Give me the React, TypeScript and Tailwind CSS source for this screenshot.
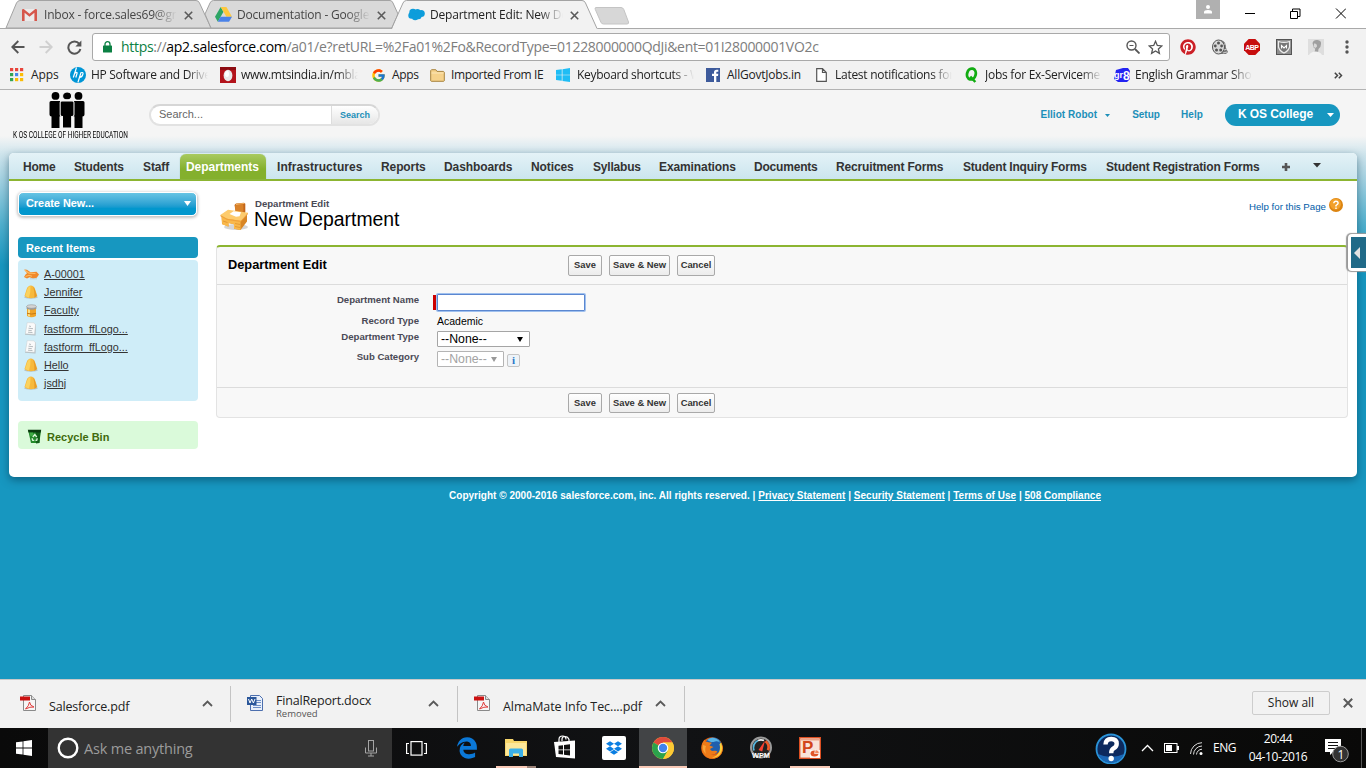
import React from "react";
import { FcGoogle } from "react-icons/fc";
import { FaPinterest, FaEdgeLegacy, FaDropbox } from "react-icons/fa6";

const SEGOE = "font-['Open_Sans','Noto_Sans',sans-serif]";
const FADE = "[mask-image:linear-gradient(to_right,#000_82%,transparent)]";

/* ---------- Browser icons ---------- */
const Gmail = () => (
  <svg width="15" height="12" viewBox="0 0 15 12">
    <path d="M1 0h13v12H1z" fill="#eceaea" />
    <path d="M0 1.2V12h2.6V3.8L7.500 7.800l4.900-4V12H15V1.200C15 .2 13.700-.2 13 .3L7.500 4.800 2 .3C1.300-.2 0 .2 0 1.200z" fill="#d6564b" />
  </svg>
);
const Drive = () => (
  <svg width="17" height="15" viewBox="0 0 17 15">
    <path d="M5.700 0L0 9.800 2.800 14.700 8.500 4.800z" fill="#2da565" />
    <path d="M5.700 0h5.700L17 9.800h-5.600z" fill="#fdc83e" />
    <path d="M5.600 9.800H17l-2.900 4.900H2.800z" fill="#4a82e8" />
  </svg>
);
const Cloud = () => (
  <svg width="17" height="13" viewBox="0 0 17 13">
    <g fill="#0d9ddb">
      <circle cx="5" cy="4.500" r="3.700" /><circle cx="9.500" cy="4" r="3" /><circle cx="13.200" cy="5.500" r="3.600" />
      <circle cx="3.500" cy="7.500" r="3.200" /><circle cx="7.200" cy="9" r="3.300" /><circle cx="10.500" cy="8.300" r="3" />
    </g>
  </svg>
);
const TabClose = () => (
  <svg width="9" height="9" viewBox="0 0 9 9"><path d="M.8.8l7.400 7.400M8.200.8L.8 8.200" stroke="#5a5a5a" strokeWidth="1.600" /></svg>
);
const Arrow = ({ flip, color }: { flip?: boolean; color: string }) => (
  <svg width="14" height="14" viewBox="0 0 14 14" className={flip ? "rotate-180" : ""}>
    <path d="M13.500 7H1.500M7.300 1L1.300 7l6 6" fill="none" stroke={color} strokeWidth="1.900" />
  </svg>
);
const Reload = () => (
  <svg width="15" height="15" viewBox="0 0 15 15">
    <path d="M12.300 3.800A6.100 6.100 0 1 0 13.400 9" fill="none" stroke="#555" strokeWidth="2" />
    <path d="M14.400.5v6H8.400z" fill="#555" />
  </svg>
);
const Lock = () => (
  <svg width="9" height="12" viewBox="0 0 9 12">
    <path d="M2 5V3.200a2.500 2.500 0 0 1 5 0V5" fill="none" stroke="#0b8043" strokeWidth="1.300" /><rect y="4.500" width="9" height="7" rx=".6" fill="#0b8043" />
  </svg>
);
const AppsGrid = () => (
  <svg width="14" height="14" viewBox="0 0 14 14">
    {["#e8453c", "#e8453c", "#e8453c", "#34a353", "#4a86e8", "#fbbc05", "#34a353", "#fbbc05", "#fbbc05"].map((c, i) => (
      <rect key={i} x={(i % 3) * 5} y={Math.floor(i / 3) * 5} width="3.200" height="3.200" fill={c} />
    ))}
  </svg>
);
const Hp = () => (
  <svg width="16" height="16" viewBox="0 0 16 16">
    <circle cx="8" cy="8" r="8" fill="#0096d6" />
    <path d="M6.500 .5L3.300 10.500M4.700 6.300Q7.500 4.300 7 6.500L5.800 10.500M11 5.500L7.900 15.500M10.800 5.700Q13.800 4.800 12.800 7.500 11.800 10.500 9.400 10.300" fill="none" stroke="#fff" strokeWidth="1.200" />
  </svg>
);
const Mts = () => (
  <svg width="16" height="16" viewBox="0 0 16 16">
    <rect width="16" height="16" fill="#b3131b" /><rect width="16" height="3" fill="#8d0c12" />
    <ellipse cx="8" cy="8.500" rx="4.400" ry="5.800" fill="#e9e9ea" /><ellipse cx="7" cy="7" rx="2" ry="3" fill="#fff" />
  </svg>
);
const Folder = () => (
  <svg width="15" height="13" viewBox="0 0 15 13">
    <path d="M.7 11.800V1.600l.8-.9h4.300l1.200 1.700h6.500l.8.800v8.600l-.6.500H1.300z" fill="#f6d28b" stroke="#a8843f" />
    <path d="M1.500 4h12" stroke="#fbe6b8" />
  </svg>
);
const WinLogo = ({ color, size }: { color: string; size: number }) => (
  <svg width={size} height={size} viewBox="0 0 16 16">
    <path d="M0 2.300l6.600-.9v6.200H0zM7.400 1.300L16 0v7.600H7.400zM0 8.400h6.600v6.200L0 13.700zM7.400 8.400H16V16l-8.600-1.200z" fill={color} />
  </svg>
);
const Fb = () => (
  <svg width="14" height="14" viewBox="0 0 14 14">
    <rect width="14" height="14" fill="#3d5a9b" /><path d="M8 14V8H6V5.800h2V4.300C8 2.500 9 1.700 10.600 1.700h1.700v2.100h-1.100c-.7 0-.9.300-.9.900v1.100h2L12 8h-1.700v6z" fill="#fff" />
  </svg>
);
const Page = () => (
  <svg width="11" height="14" viewBox="0 0 11 14"><path d="M.7.7h5.800l3.800 3.800v8.800H.7zM6.500.7v3.800h3.800" fill="#fff" stroke="#555" strokeWidth="1.200" /></svg>
);
const QIcon = () => (
  <svg width="14" height="16" viewBox="0 0 14 16">
    <ellipse cx="7.400" cy="7" rx="4.300" ry="5.500" fill="none" stroke="#12ac12" strokeWidth="2.800" transform="rotate(15 7.400 7)" />
    <path d="M6.300 9.500l5 5.500" stroke="#12ac12" strokeWidth="2.500" />
  </svg>
);
const Gr8 = () => (
  <svg width="16" height="16" viewBox="0 0 16 16">
    <path d="M2 3L9 1h5l2 3-1 4 1 4-3 3H4L0 12z" fill="#2424f2" />
    <text x="0" y="11" fontSize="9" fontWeight="bold" fill="#fff" fontFamily="Liberation Sans" textLength="9">gr</text>
    <text x="9" y="12.500" fontSize="12" fontWeight="bold" fill="#fff" fontFamily="Liberation Sans">8</text>
  </svg>
);

const bookmarks: { icon: React.ReactNode; text: string; cell: string; track: string; fade?: string }[] = [
  { icon: <AppsGrid />, text: "Apps", cell: "w-[60px]", track: "tracking-[-0.1px]" },
  { icon: <Hp />, text: "HP Software and Drive", cell: "w-[150px]", track: "tracking-[-0.3px]", fade: "w-[117px]" },
  { icon: <Mts />, text: "www.mtsindia.in/mbla", cell: "w-[151px]", track: "tracking-[-0.3px]", fade: "w-[117px]" },
  { icon: <FcGoogle size={15} />, text: "Apps", cell: "w-[59px]", track: "tracking-[-0.3px]" },
  { icon: <Folder />, text: "Imported From IE", cell: "w-[126px]", track: "tracking-[-0.35px]" },
  { icon: <WinLogo color="#1fbdf5" size={14} />, text: "Keyboard shortcuts - W", cell: "w-[150px]", track: "tracking-[-0.3px]", fade: "w-[117px]" },
  { icon: <Fb />, text: "AllGovtJobs.in", cell: "w-[108px]", track: "tracking-[-0.22px]" },
  { icon: <span className="pl-0.5"><Page /></span>, text: "Latest notifications for", cell: "w-[150px]", track: "tracking-[-0.27px]", fade: "w-[117px]" },
  { icon: <QIcon />, text: "Jobs for Ex-Serviceme", cell: "w-[150px]", track: "tracking-[-0.25px]", fade: "w-[117px]" },
  { icon: <Gr8 />, text: "English Grammar Sho", cell: "w-[140px]", track: "tracking-[-0.25px]", fade: "w-[117px]" },
];

const browserTabs = [
  { icon: <Gmail />, text: "Inbox - force.sales69@gr", cell: "w-[193px]", box: "w-[133px]", color: "text-[#454545]" },
  { icon: <Drive />, text: "Documentation - Google", cell: "w-[193px]", box: "w-[133px]", color: "text-[#454545]" },
  { icon: <Cloud />, text: "Department Edit: New De", cell: "w-[193px]", box: "w-[133px]", color: "text-[#222]" },
];

function TabStrip() {
  return (
    <div className="relative h-[29px] shrink-0 bg-white">
      <svg className="absolute left-0 top-0" width="1366" height="29" viewBox="0 0 1366 29">
        <path d="M6 28L16.500 3Q17.800.5 20 .5H196Q198.500.5 199.500 3L211 28z" fill="#d9d9d9" stroke="#a3a3a3" />
        <path d="M205 14L210 3Q211 .5 213.500 .5H390Q392 .5 393 3L398 14 392 28H211z" fill="#d9d9d9" stroke="#a3a3a3" />
        <path d="M0 28.500H1366" stroke="#a9a9a9" />
        <path d="M392 29L403 3Q404 .5 406.500 .5H582Q584.500 .5 585.500 3L597 28.500 598 29z" fill="#f2f2f2" />
        <path d="M391.500 28.500L403 3Q404 .5 406.500 .5H582Q584.500 .5 585.500 3L597 28.500" fill="none" stroke="#a3a3a3" />
        <path d="M596 7.500H621Q623 7.500 623.800 9.500L628.500 22Q629 24 627 24H603.500Q601.500 24 600.800 22L595.300 9.500Q594.500 7.500 596 7.500z" fill="#d7d7d7" stroke="#c4c4c4" />
      </svg>
      <div className="relative flex h-[29px] items-center pl-[22px]">
        {browserTabs.map((t) => (
          <div key={t.text} className={`flex shrink-0 items-center ${t.cell}`}>
            <span className="flex w-[22px] shrink-0 items-center">{t.icon}</span>
            <span className={`whitespace-nowrap text-[12px] tracking-[-0.2px] ${t.box} ${t.color} ${FADE}`}>{t.text}</span>
            <span className="ml-[7px] flex pt-px"><TabClose /></span>
          </div>
        ))}
        <div className="ml-auto flex h-full shrink-0 items-start">
          <div className="mr-[25px] flex h-[19px] w-6 items-center justify-center bg-[#b0b0b0]">
            <svg width="8" height="9" viewBox="0 0 8 9"><circle cx="4" cy="2" r="2" fill="#fff" /><path d="M0 8.500V7q0-2 4-2t4 2v1.500z" fill="#fff" /></svg>
          </div>
          <svg className="mr-[20px] mt-2" width="101" height="11" viewBox="0 0 101 11" fill="none" stroke="#000">
            <path d="M0 5.500H10M45.500 3.500h7v7h-7zM47.500 3.500v-2.500h7.500v7.500h-2.500M91 .5l10 10M101 .5l-10 10" />
          </svg>
        </div>
      </div>
    </div>
  );
}

function Toolbar() {
  return (
    <div className="flex h-[36px] shrink-0 items-center bg-[#f2f2f2] pl-[11px]">
      <Arrow color="#555" />
      <span className="ml-[14px] flex"><Arrow flip color="#d0d0d0" /></span>
      <span className="ml-[14px] flex"><Reload /></span>
      <div className="ml-[10px] flex h-[28px] w-[1078px] items-center rounded-[3px] border border-[#a9a9a9] bg-white pl-[10px]">
        <Lock />
        <span className="ml-[9px] w-[1005px] shrink-0 whitespace-nowrap text-[14px] leading-5 tracking-[-0.31px] text-[#7d7d7d]">
          <span className="text-[#0b8043]">https</span>://<span className="text-black">ap2.salesforce.com</span>/a01/e?retURL=%2Fa01%2Fo&amp;RecordType=01228000000QdJi&amp;ent=01I28000001VO2c
        </span>
        <svg className="shrink-0" width="14" height="14" viewBox="0 0 14 14" fill="none" stroke="#555"><circle cx="5.500" cy="5.500" r="4.500" strokeWidth="1.400" /><path d="M3.500 5.500h4" /><path d="M9 9l4.500 4.500" strokeWidth="1.800" /></svg>
        <svg className="ml-[8px] shrink-0" width="15" height="15" viewBox="0 0 15 15"><path d="M7.500 1.300l1.800 4.100 4.500.5-3.400 3 1 4.500-3.900-2.400-3.900 2.400 1-4.500-3.400-3 4.500-.5z" fill="none" stroke="#555" strokeWidth="1.300" /></svg>
      </div>
      <div className="ml-[10px] flex items-center gap-[16px]">
        <span className="flex w-4 rounded-full bg-white"><FaPinterest size={16} color="#cb2027" /></span>
        <svg width="16" height="16" viewBox="0 0 16 16">
          <path d="M9 1q5 1 5 8l2 4-2 2H8z" fill="#777" /><ellipse cx="6.500" cy="8" rx="6" ry="7" fill="#d8d8d8" stroke="#555" />
          <g fill="#555"><circle cx="6.500" cy="4" r="1.500" /><circle cx="3.300" cy="7" r="1.400" /><circle cx="9.600" cy="7" r="1.400" /><circle cx="4.500" cy="11" r="1.500" /><circle cx="8.700" cy="11" r="1.500" /></g>
          <path d="M11 14l4-1M12 11l3-1M12 5l2 0" stroke="#ccc" />
        </svg>
        <svg width="16" height="16" viewBox="0 0 16 16"><path d="M4.700 0h6.600L16 4.700v6.600L11.300 16H4.700L0 11.300V4.700z" fill="#c70d0d" /><text x="1.300" y="10.700" fontSize="7" fontWeight="bold" fill="#fff" fontFamily="Liberation Sans" textLength="13.500">ABP</text></svg>
        <svg width="16" height="16" viewBox="0 0 16 16"><rect x=".5" y=".5" width="15" height="15" fill="#8f8f8f" stroke="#555" /><path d="M2.500 2.500q5.500 1.800 11 0v5.500q-1 4-5.500 6-4.500-2-5.500-6z" fill="#777" stroke="#eee" strokeWidth="1.200" /><path d="M5.500 9.500V6.500L8 9l2.500-2.500v3" fill="none" stroke="#fff" strokeWidth="1.100" /></svg>
        <svg width="16" height="16" viewBox="0 0 16 16"><rect width="16" height="16" fill="#dedede" /><path d="M4.500 4q1-3.500 5-3t3.500 4q0 3.500-2.500 5L10 13.500H6.500l.8-4Q5.500 9.500 5.300 7z" fill="#9f9f9f" /><path d="M6 4.500q3-.5 3 3L7.500 9 5.700 8z" fill="#d8d8d8" /><path d="M1 16q2-3.500 6.500-3.500T14 16z" fill="#f3f3f3" /></svg>
        <svg className="ml-[5px]" width="4" height="14" viewBox="0 0 4 14" fill="#555"><circle cx="2" cy="2" r="1.700" /><circle cx="2" cy="7" r="1.700" /><circle cx="2" cy="12" r="1.700" /></svg>
      </div>
    </div>
  );
}

function BookmarkBar() {
  return (
    <div className="flex h-[25px] shrink-0 items-center border-b border-[#b3b3b3] bg-[#f2f2f2] pb-[4px] pl-[10px]">
      {bookmarks.map((b, i) => (
        <div key={i} className={`flex shrink-0 items-center ${b.cell}`}>
          <span className="flex w-[21px] shrink-0 items-center">{b.icon}</span>
          <span className={`whitespace-nowrap text-[12px] leading-4 text-[#222] ${b.track} ${b.fade ? `${b.fade} ${FADE}` : ""}`}>{b.text}</span>
        </div>
      ))}
      <svg className="ml-auto mr-[23px]" width="9" height="7" viewBox="0 0 9 7"><path d="M.8.700L3.500 3.500.8 6.300M4.800.700L7.500 3.500 4.800 6.300" fill="none" stroke="#444" strokeWidth="1.500" /></svg>
    </div>
  );
}

/* ---------- Page ---------- */
const Person = ({ x }: { x: number }) => (
  <g transform={`translate(${x} 0)`}>
    <circle cx="6" cy="3.900" r="3.900" />
    <path d="M1.500 9h9q1.500 0 1.500 1.500v12q0 2-2 2v11.500H2V24.500q-2 0-2-2v-12Q0 9 1.500 9z" />
  </g>
);

function Header() {
  return (
    <div className="flex h-[63px] shrink-0 items-start font-['Liberation_Sans',Arial,sans-serif]">
      <div className="ml-[13px] flex w-[136px] flex-col pt-[2px]">
        <svg className="ml-[34px]" width="40" height="38" viewBox="0 0 40 38">
          <Person x={2.500} /><Person x={25.500} />
          <g stroke="#f5f5f5" strokeWidth="0.900"><g transform="translate(-2 0) scale(1.150 1)"><Person x={13.200} /></g></g>
        </svg>
        <span className="origin-left scale-x-[0.78] whitespace-nowrap font-['Roboto',sans-serif] text-[8.400px] leading-[10px] text-black">K OS COLLEGE OF HIGHER EDUCATION</span>
      </div>
      <div className="mt-[14px] flex h-[22px] w-[231px] overflow-hidden rounded-full border-2 border-[#e2e2e2] border-t-[#d6d6d6] bg-white">
        <div className="w-[180px] pl-2 text-[11px] leading-[17px] text-[#666]">Search...</div>
        <div className="flex-1 border-l border-[#ddd] bg-linear-to-b from-white to-[#e6e6e6] pl-[8px] text-[9px] font-bold leading-[18px] text-[#1c8fb9]">Search</div>
      </div>
      <div className="ml-auto mt-[14px] flex h-[22px] items-center text-[10px] font-bold text-[#1c8fb9]">
        <span className="pb-px tracking-[0.05px]">Elliot Robot</span>
        <svg className="ml-[8px]" width="5" height="3" viewBox="0 0 5 3"><path d="M0 0h5L2.500 3z" fill="#1c8fb9" /></svg>
        <span className="ml-[22px] pb-px">Setup</span>
        <span className="ml-[21px] pb-px tracking-[0.1px]">Help</span>
        <div className="ml-[22px] mr-[26px] flex h-[22px] w-[115px] items-center rounded-full bg-[#1797c0] pb-[2px] pl-[13px] text-[12px] tracking-[-0.08px] text-white">
          K OS College
          <svg className="ml-auto mr-[6px] mt-px" width="7" height="4" viewBox="0 0 7 4"><path d="M0 0h7L3.500 4z" fill="#fff" /></svg>
        </div>
      </div>
    </div>
  );
}

const navItems: [string, string][] = [
  ["Home", "w-[51px] tracking-[-0.2px]"],
  ["Students", "w-[69px] tracking-[-0.2px]"],
  ["Staff", "w-[43px] tracking-[-0.1px]"],
  ["Departments", "w-[91px]"],
  ["Infrastructures", "w-[104px] tracking-[0.05px]"],
  ["Reports", "w-[63px] tracking-[-0.1px]"],
  ["Dashboards", "w-[87px] tracking-[-0.1px]"],
  ["Notices", "w-[62px] tracking-[-0.1px]"],
  ["Syllabus", "w-[66px] tracking-[-0.2px]"],
  ["Examinations", "w-[95px] tracking-[-0.1px]"],
  ["Documents", "w-[82px] tracking-[-0.2px]"],
  ["Recruitment Forms", "w-[127px] tracking-[-0.16px]"],
  ["Student Inquiry Forms", "w-[143px] tracking-[-0.21px]"],
  ["Student Registration Forms", "w-[176px] tracking-[-0.17px]"],
];

function NavBar() {
  return (
    <div className="flex h-[28px] shrink-0 items-stretch rounded-t-[5px] border-b-2 border-[#8cb531] bg-linear-to-b from-[#e4f2f7] to-[#cbe5ee] pl-[14px] text-[12px] font-bold leading-[28px] text-[#333]">
      {navItems.map(([n, w]) =>
        n === "Departments" ? (
          <div key={n} className={`shrink-0 ${w}`}>
            <div className="-ml-[6px] mt-px h-[25px] w-[86px] rounded-t-[6px] bg-linear-to-b from-[#a9ca5e] to-[#84b02d] to-60% pl-[6px] leading-[26px] tracking-[-0.05px] text-white shadow-[0_0_1px_#7a9]">{n}</div>
          </div>
        ) : (
          <span key={n} className={`shrink-0 whitespace-nowrap ${w}`}>{n}</span>
        )
      )}
      <svg className="mt-[10px]" width="8" height="8" viewBox="0 0 8 8"><path d="M2.700 0h2.600v2.700H8v2.600H5.300V8H2.700V5.300H0V2.700h2.700z" fill="#555" /></svg>
      <svg className="ml-[23px] mt-[10px]" width="8" height="5" viewBox="0 0 8 5"><path d="M0 0h8L4 4.500z" fill="#333" /></svg>
    </div>
  );
}

const Bell = () => (
  <svg width="14" height="14" viewBox="0 0 14 14">
    <ellipse cx="7" cy="12.200" rx="6.800" ry="1.600" fill="#b5c2c6" />
    <path d="M6.800 .5Q9.800.5 11 4L13.300 11Q11 13.300 6.800 13.300T.5 11L2.700 4Q4 .5 6.800.5z" fill="#f7b93c" />
    <path d="M6.500 1Q4.300 1.200 3.300 4.300L1.200 10.800Q3 12.300 5 12.500 6.800 7 6.500 1z" fill="#fbd25e" /><path d="M9.200 1.500Q10.200 2.300 10.900 4.600L12.900 11Q12 12.300 10.400 12.700 10.600 6 9.200 1.500z" fill="#e69b2a" />
  </svg>
);
const Hands = () => (
  <svg width="15" height="11" viewBox="0 0 15 11">
    <path d="M.2 .5L3 .8 6.500 3.300 12.500 2.800 15 5.500 12.800 8.800 9 9.500 5.500 8.300 3 9.500 0 8 1.500 5.500 3 4.300z" fill="#f0892b" />
    <path d="M.8 1.300L5 4.200l6.500.3M1.500 7.500L5 6.300l3 1" stroke="#fdbb62" strokeWidth="1.200" fill="none" /><path d="M6 9.800h7" stroke="#b9c6c9" strokeWidth=".8" />
  </svg>
);
const Barrel = () => (
  <svg width="14" height="14" viewBox="0 0 14 14">
    <path d="M3 3v9q4.500 2.500 9 0V3z" fill="#f0a52a" /><path d="M4 4v8l2 .6V4.500z" fill="#fddf84" /><path d="M3 9.300q4.500 1.500 9 0" stroke="#c87a12" fill="none" />
    <path d="M2.600 2.500v2.200q5 2 9.800 0V2.500z" fill="#999" /><ellipse cx="7.500" cy="2.500" rx="4.900" ry="1.800" fill="#d4d4d4" stroke="#999" strokeWidth=".6" />
  </svg>
);
const Doc = () => (
  <svg width="13" height="14" viewBox="0 0 13 14">
    <path d="M3.500 1l8.500 1.500L11.500 13.500 1 12.800z" fill="#b4bec2" /><path d="M3.200.6L10 .8l1.500 2L10.500 12.300 1.300 11.800z" fill="#fafafa" stroke="#c9d0d3" strokeWidth=".5" /><path d="M5 4l2 .5M4.500 6.200l4.500.5M4.300 8.300l3.500.4M4 10.200l4.500.4" stroke="#b7bdc0" />
  </svg>
);
const recents: [React.ReactNode, string, string][] = [
  [<Hands />, "A-00001", "h-[18px]"],
  [<Bell />, "Jennifer", "h-[18px]"],
  [<Barrel />, "Faculty", "h-[19px]"],
  [<Doc />, "fastform_ffLogo...", "h-[18px]"],
  [<Doc />, "fastform_ffLogo...", "h-[18px]"],
  [<Bell />, "Hello", "h-[18px]"],
  [<Bell />, "jsdhj", "h-[18px]"],
];

function Sidebar() {
  return (
    <div className="ml-[9px] w-[180px] shrink-0">
      <div className="mt-[11px] flex h-[24px] w-[179px] items-center justify-between rounded-[5px] border border-white bg-linear-to-b from-[#66c4e4] to-[#0297cd] to-70% pb-[2px] pl-[7px] pr-[5px] text-[10.900px] font-bold text-white shadow-[0_1px_3px_1px_#c4c4c4]">
        Create New...
        <svg width="7" height="5" viewBox="0 0 7 5"><path d="M0 0h7L3.500 5z" fill="#fff" /></svg>
      </div>
      <div className="mt-[21px] h-[21px] rounded-[4px] bg-[#1797c0] pl-2 text-[11px] font-bold leading-[22px] tracking-[0.05px] text-white">Recent Items</div>
      <div className="mt-[2px] h-[141px] rounded-[4px] bg-[#cfedf8] pl-[6px] pt-[5px]">
        {recents.map(([icon, name, h], i) => (
          <div key={i} className={`flex items-center ${h}`}>
            <span className="flex w-5 items-center">{icon}</span>
            <a className="text-[10.800px] leading-none text-[#333] underline underline-offset-1">{name}</a>
          </div>
        ))}
      </div>
      <div className="mt-5 flex h-[28px] items-center rounded-[4px] bg-[#dafada] pl-[9px] pt-[4px] text-[11px] font-bold text-[#3f6b0c]">
        <svg className="-mt-px mr-[5px]" width="15" height="15" viewBox="0 0 15 15">
          <path d="M1.200 1.500h12.600L12.500 14H4z" fill="#238a2a" /><path d="M9 3l4.500-.5L12.300 14 9 14.500z" fill="#125f18" /><path d="M.8.800h13.400l-.5 2.700H1.500z" fill="#0a3a0e" /><path d="M2.500 3.500h3.500l.5 3-3 .8z" fill="#4cba50" opacity=".7" />
          <path d="M5.800 8L7.800 5.500 9.800 8M5 9.200L5.700 11.300h1.600M10.300 9.200l-.6 2.100H8.500" fill="none" stroke="#d8f5d5" strokeWidth="1.300" />
        </svg>
        Recycle Bin
      </div>
    </div>
  );
}

const Btn = ({ w, children }: { w: string; children: React.ReactNode }) => (
  <button className={`h-full whitespace-nowrap rounded-[2px] border border-[#a9a9a9] bg-linear-to-b from-white to-[#ececec] text-center text-[9.400px] font-bold text-[#333] ${w}`}>{children}</button>
);
const Buttons = ({ cls }: { cls: string }) => (
  <div className={`flex gap-[7px] ${cls}`}>
    <Btn w="w-[34px]">Save</Btn>
    <Btn w="w-[61px]">Save &amp; New</Btn>
    <Btn w="w-[38px]">Cancel</Btn>
  </div>
);
const Label = ({ children }: { children: React.ReactNode }) => (
  <span className="w-[202px] shrink-0 text-right text-[9.600px] font-bold leading-[12px] text-[#4a4a56]">{children}</span>
);
const Caret = ({ color }: { color: string }) => (
  <svg width="6" height="5" viewBox="0 0 6 5"><path d="M0 0h6L3 5z" fill={color} /></svg>
);

function DeskIcon() {
  return (
    <svg width="29" height="29" viewBox="0 0 29 29">
      <ellipse cx="16" cy="25" rx="12" ry="3" fill="#d5d5d5" />
      <path d="M14.500 3l1.500-1.500 8-.8 1.300 1v8.500l-2 2.300-7.500-2z" fill="#c2651a" /><path d="M15 3.200l8.300-1 .2 7.500-8 1z" fill="#d9822a" /><path d="M16 1.700l7.800-.7 1 .8-8.800 1.200z" fill="#f6b866" />
      <path d="M1.500 13l5 3 14.300 2.500L27 12v7.500L20.500 28l-6.500-1.200v-4.500L8.500 21v3.500L2 22z" fill="#d98624" />
      <path d="M1.500 13l5.500 3.500 13.500 2V28L14 26.800v-4.500L8.500 21v3.700L2.200 22.200z" fill="#f9b84a" />
      <path d="M3 19l4.500 1.500M15 24.500l5 1M15 21.500l5 1" stroke="#e0922f" strokeWidth=".8" />
      <path d="M.3 13L8 7.800 28 10.800l-7.300 8L7 16.800z" fill="#fdcb6c" /><path d="M.3 13L7 16.800l13.700 2L28 10.800v1.300l-7.300 8L7 18 .5 14.300z" fill="#f0a23a" />
      <path d="M9.500 12l4-2.800 7.500 1-1.500 4-3.500.5z" fill="#fff" />
    </svg>
  );
}

function FormPanel() {
  return (
    <div className="mt-[14px] flex h-[173px] flex-col rounded-[4px] border border-t-2 border-[#e3e3e3] border-t-[#8cb531] bg-[#f8f8f8]">
      <div className="flex h-[38px] shrink-0 items-center border-b border-[#dcdcdc]">
        <span className="w-[351px] pl-[11px] text-[12.800px] font-bold leading-none text-black">Department Edit</span>
        <Buttons cls="h-[21px]" />
      </div>
      <div className="flex h-[103px] shrink-0 flex-col border-b border-[#dcdcdc]">
        <div className="mt-[9px] flex h-[18px]">
          <Label>Department Name</Label>
          <span className="ml-[14px] mt-px h-[15px] w-[3px] bg-[#c00]" />
          <input className="ml-px h-[17px] w-[148px] rounded-[1px] border border-[#5b87d0] bg-white shadow-[0_0_0_1px_#9fc0ee]" />
        </div>
        <div className="mt-[3px] flex h-[16px]">
          <Label>Record Type</Label>
          <span className="ml-[18px] text-[10.500px] leading-[13px] text-black">Academic</span>
        </div>
        <div className="flex h-[20px]">
          <Label>Department Type</Label>
          <div className="ml-[18px] flex h-[16px] w-[93px] items-center justify-between rounded-[1px] border border-[#a5a5a5] bg-white pl-[3px] pr-[6px] text-[12.300px] leading-none text-black">--None--<Caret color="#000" /></div>
        </div>
        <div className="flex h-[20px]">
          <Label>Sub Category</Label>
          <div className="ml-[18px] flex h-[16px] w-[67px] items-center justify-between rounded-[1px] border border-[#b4b4b4] bg-white pl-[3px] pr-[6px] text-[12.300px] leading-none text-[#a3a3a3]">--None--<Caret color="#999" /></div>
          <div className="ml-[3px] mt-[3px] flex h-[13px] w-[13px] items-center justify-center rounded-[2px] border border-[#c4c4c4] bg-[#eef3f8] font-['Liberation_Serif',serif] text-[11px] font-bold leading-none text-[#2a78c8]">i</div>
        </div>
      </div>
      <div className="flex flex-1 items-start pl-[351px] pt-[5px]"><Buttons cls="h-[20px]" /></div>
    </div>
  );
}

function Salesforce() {
  return (
    <div className="relative flex h-[589px] shrink-0 flex-col bg-[#1797c0] bg-[linear-gradient(to_bottom,#f5f5f5_0px,#f5f5f5_46px,#cfe5ed_64px,#a3d2e2_90px,#4fb0ce_135px,#1797c0_175px)] font-['Liberation_Sans',Arial,sans-serif]">
      <Header />
      <div className="mx-[9px] flex h-[324px] shrink-0 flex-col rounded-[5px] bg-white shadow-[0_3px_8px_rgba(0,45,70,0.5)]">
        <NavBar />
        <div className="flex">
          <Sidebar />
          <div className="ml-[18px] mr-[9px] flex-1">
            <div className="flex pt-[17px]">
              <div className="pl-[4px] pt-[4px]"><DeskIcon /></div>
              <div className="ml-[5px] h-[33px]">
                <div className="pl-px text-[9.600px] font-bold leading-[12px] text-[#4a4a56]">Department Edit</div>
                <div className="text-[19.400px] leading-[19px] text-black">New Department</div>
              </div>
              <div className="ml-auto mr-[5px] flex h-[14px] items-center text-[9.700px] text-[#015ba7]">
                <span className="pt-[4px]">Help for this Page</span>
                <svg className="ml-[3px]" width="14" height="14" viewBox="0 0 14 14"><circle cx="7" cy="7" r="7" fill="#dc8410" /><circle cx="6.500" cy="6" r="5.500" fill="#f2a02a" /><path d="M4.800 5.300q.2-2 2.200-2t2.200 1.800Q9.200 6.300 7 7.500v1M7 9.500V11" fill="none" stroke="#fff" strokeWidth="1.400" /></svg>
              </div>
            </div>
            <FormPanel />
          </div>
        </div>
      </div>
      <div className="mt-[12px] whitespace-nowrap pl-[449px] text-[10px] font-bold leading-[13px] tracking-[0.023px] text-white">
        Copyright © 2000-2016 salesforce.com, inc. All rights reserved. | <u>Privacy Statement</u> | <u>Security Statement</u> | <u>Terms of Use</u> | <u>508 Compliance</u>
      </div>
      <div className="absolute right-0 top-[144px] flex h-[37px] w-[18px] rounded-l-[4px] bg-white py-[3px] pl-[3px] shadow-[-1px_0_1px_1px_#999]">
        <div className="flex flex-1 items-center bg-[#206a88] pl-[3px]"><svg width="6" height="12" viewBox="0 0 6 12"><path d="M6 0v12L0 6z" fill="#e2e2e2" /></svg></div>
      </div>
    </div>
  );
}

/* ---------- Download shelf ---------- */
const Pdf = () => (
  <svg width="16" height="16" viewBox="0 0 16 16">
    <path d="M3.500.5h8l4 4v11h-12z" fill="#f6f6f6" stroke="#8a8a8a" /><path d="M11.500.5v4h4" fill="#ddd" stroke="#8a8a8a" /><path d="M0 1.500h10v4H0z" fill="#cc1212" />
    <path d="M5.500 14q3.500-3 4-7 .5 4 4.500 5-4-.5-8.500 2z" fill="none" stroke="#e03a3a" />
  </svg>
);
const Word = () => (
  <svg width="16" height="16" viewBox="0 0 16 16">
    <path d="M3.500.5h9l3 3v12h-12z" fill="#e9f0fb" stroke="#4c6fae" /><path d="M9 5.500h5M9 7.500h5M6 10.500h8M6 12.500h8" stroke="#6c8ec6" />
    <rect y="2" width="9.500" height="8" fill="#2b579a" /><path d="M1.500 4l1.500 4 1.700-4 1.700 4L8 4" fill="none" stroke="#fff" />
  </svg>
);
const UpCaret = ({ cls }: { cls: string }) => (
  <svg className={cls} width="11" height="7" viewBox="0 0 11 7"><path d="M1 6l4.500-4.500L10 6" fill="none" stroke="#5a5a5a" strokeWidth="1.800" /></svg>
);

function Shelf() {
  return (
    <div className="flex h-[49px] shrink-0 items-start border-t border-[#c9c9c9] bg-[#f2f2f2] text-[12.500px] text-[#222]">
      <div className="mt-[6px] flex h-[36px] w-[231px] items-start border-r border-[#c4c4c4] pl-[20px] pt-[9px]">
        <Pdf /><span className="ml-[13px] mt-[2px] w-[80px] whitespace-nowrap leading-5 tracking-[-0.17px]">Salesforce.pdf</span><UpCaret cls="ml-[73px] mt-[5px]" />
      </div>
      <div className="mt-[6px] flex h-[36px] w-[227px] items-start border-r border-[#c4c4c4] pl-[16px] pt-[9px]">
        <Word />
        <div className="-mt-[3px] ml-[13px] w-[96px] whitespace-nowrap">
          <div className="leading-[17px] tracking-[-0.17px]">FinalReport.docx</div>
          <div className="text-[9.500px] leading-[10px] text-[#555]">Removed</div>
        </div>
        <UpCaret cls="ml-[56px] mt-[5px]" />
      </div>
      <div className="mt-[6px] flex h-[36px] w-[227px] items-start border-r border-[#c4c4c4] pl-[16px] pt-[9px]">
        <Pdf /><span className="ml-[13px] mt-[2px] w-[140px] whitespace-nowrap leading-5 tracking-[-0.09px]">AlmaMate Info Tec....pdf</span><UpCaret cls="ml-[12px] mt-[5px]" />
      </div>
      <div className="ml-auto mr-[13px] mt-[11px] flex items-center">
        <div className="h-[24px] w-[78px] rounded-[2px] border border-[#cdcdcd] text-center text-[12px] leading-[22px]">Show all</div>
        <svg className="ml-[13px]" width="10" height="10" viewBox="0 0 10 10"><path d="M.8.8l8.400 8.400M9.200.8L.8 9.200" stroke="#5a5a5a" strokeWidth="2" /></svg>
      </div>
    </div>
  );
}

/* ---------- Taskbar ---------- */
const Explorer = () => (
  <svg width="22" height="18" viewBox="0 0 22 18"><path d="M0 0h8l1 2h13v15H0z" fill="#f7d66b" /><path d="M1 4h20v12H1z" fill="#fce79a" /><path d="M4 18v-7q0-1.500 1.500-1.500h11q1.500 0 1.500 1.500v7h-4v-3.500H8V18z" fill="#3bb0e8" /></svg>
);
const Store = () => (
  <svg width="22" height="24" viewBox="0 0 22 24">
    <path d="M5 7V4.500Q5 1 8.500 1T12 4.500M8 6V4q0-2.500 3-2.500T15 4.500V7" fill="none" stroke="#fff" strokeWidth="1.200" />
    <path d="M0 7l21-1.500V23.500L2 22z" fill="#fff" /><path d="M4.500 10.800l4.500-.6v4.300H4.500zM10 10.100L16 9.300v5.200h-6zM4.500 15.300H9v4.300L4.500 19zM10 15.300h6v5.200l-6-.8z" fill="#111" />
  </svg>
);
const Chrome = () => (
  <svg width="22" height="22" viewBox="0 0 22 22">
    <circle cx="11" cy="11" r="11" fill="#fcc934" />
    <path d="M11 11L1.500 5.500A11 11 0 0 1 20.500 5.500H11z" fill="#df4a3c" /><path d="M1.500 5.500A11 11 0 0 0 11 22l4.800-8.300L11 11z" fill="#2ba24c" />
    <path d="M20.500 5.500H11l4.800 8.200L11 22A11 11 0 0 0 20.500 5.500z" fill="#fcc934" />
    <circle cx="11" cy="11" r="5.300" fill="#fff" /><circle cx="11" cy="11" r="4.200" fill="#4182ec" />
  </svg>
);
const Firefox = () => (
  <svg width="22" height="22" viewBox="0 0 22 22">
    <circle cx="11" cy="11" r="10.800" fill="#e2600f" /><circle cx="12.300" cy="8.800" r="8.400" fill="#1f5fae" /><path d="M6 3q4-3.500 9-1.500 3 1 4 4-3-2-5-1-3 1-5 0z" fill="#58b4e6" />
    <path d="M1.500 6L3.500 2.500 4.500 5q2-.8 3 .3L11 5.700 8.500 8.500 12.500 10 9 12q1 2.500 4 1.800 2.500-.5 3.500 1-2.500 3.500-7.500 2.500Q16 20.500 20 13l1.500-5Q23.500 17 16 20.700 8 24 2.500 17-.5 12 1.500 6z" fill="#ee7b18" />
    <path d="M20 5.500q2.800 6.500-.8 11.500-3.200 4-8.200 3.800 5-1.500 7-5.500 1.700-4 .5-8z" fill="#fcd03c" /><path d="M2 8q-1 6 3 9-1.500-5 0-8z" fill="#f9a53a" />
  </svg>
);
const Wpm = () => (
  <svg width="24" height="24" viewBox="0 0 24 24">
    <circle cx="12" cy="11.500" r="10" fill="#222" stroke="#9a9a9a" strokeWidth="2" /><path d="M5 14.500A7.800 7.800 0 0 1 9 4.500" fill="none" stroke="#58b8e0" strokeWidth="1.800" /><path d="M9 4.500a7.800 7.800 0 0 1 6 0" fill="none" stroke="#eee" strokeWidth="1.800" /><path d="M16.500 5.300a7.800 7.800 0 0 1 2.500 9" fill="none" stroke="#f05a28" strokeWidth="2.600" />
    <path d="M9.500 14L16 4.500l-2.800 11z" fill="#fa4030" />
    <text x="3" y="21.500" fontSize="8" fontWeight="bold" fill="#fff" fontFamily="Liberation Sans" textLength="18" lengthAdjust="spacingAndGlyphs">WPM</text>
  </svg>
);
const Ppt = () => (
  <svg width="22" height="22" viewBox="0 0 22 22">
    <rect x=".7" y=".7" width="20.600" height="20.600" fill="#f9e3d8" stroke="#dc4f22" strokeWidth="1.400" /><path d="M1.500 1.500h19v2h-19z" fill="#eda387" />
    <text x="3" y="16" fontSize="17" fontWeight="bold" fill="#d2451a" fontFamily="Liberation Sans">P</text>
    <path d="M11 13h10v8H11z" fill="#fff" opacity=".85" /><ellipse cx="15.500" cy="16.500" rx="4" ry="3" fill="#e0572b" /><path d="M15.500 16.500l1-4q4 .5 4 4z" fill="#f08a62" stroke="#fff" strokeWidth=".7" />
  </svg>
);
const apps: { icon: React.ReactNode; bar?: string; bg?: string }[] = [
  { icon: <FaEdgeLegacy size={22} color="#0b78d7" /> },
  { icon: <Explorer />, bar: "w-10 bg-[linear-gradient(to_right,#f8c9b6_31px,#9c8378_31px)]" },
  { icon: <span className="mb-[2px] flex"><Store /></span> },
  { icon: <span className="flex h-6 w-6 items-center justify-center rounded-[2px] bg-white"><FaDropbox size={16} color="#0a7ee2" /></span> },
  { icon: <Chrome />, bar: "w-12 bg-[#f8c9b6]", bg: "bg-[#424446]" },
  { icon: <Firefox /> },
  { icon: <Wpm /> },
  { icon: <Ppt />, bar: "w-10 bg-[#f8c9b6]" },
];

function Taskbar() {
  return (
    <div className="flex h-[40px] shrink-0 bg-[#0b0b0c] bg-linear-to-r from-[#0a0a0a] via-[#111214] to-[#090908] text-white">
      <div className="flex w-12 items-center justify-center"><WinLogo color="#fff" size={16} /></div>
      <div className="flex w-[344px] items-center bg-[#333]">
        <svg className="ml-[9px]" width="22" height="22" viewBox="0 0 22 22"><circle cx="11" cy="11" r="9.300" fill="none" stroke="#fff" strokeWidth="2.400" /></svg>
        <span className="ml-[5px] pt-px text-[14.500px] tracking-[-0.2px] text-[#9b9b9b]">Ask me anything</span>
        <svg className="ml-auto mr-[15px]" width="12" height="17" viewBox="0 0 12 17" fill="none" stroke="#a5a5a5"><rect x="3.500" y=".5" width="5" height="10.500" /><path d="M.5 7.500v5.500h11V7.500M6 13v3M3 16h6" /></svg>
      </div>
      <div className="flex w-[48px] items-center justify-center">
        <svg width="21" height="15" viewBox="0 0 21 15" fill="none" stroke="#fff" strokeWidth="1.200"><rect x="5" y=".6" width="11" height="13.500" /><path d="M3 2.500H.6v10H3M18 2.500h2.400v10H18" /></svg>
      </div>
      <div className="ml-[3px] flex gap-px">
        {apps.map((a, i) => (
          <div key={i} className={`flex h-[40px] w-[48px] flex-col items-center ${a.bg ?? ""}`}>
            <div className="flex flex-1 items-center pt-[2px]">{a.icon}</div>
            <div className={`h-[2px] ${a.bar ?? ""}`} />
          </div>
        ))}
      </div>
      <div className="ml-auto flex items-center text-[12px]">
        <svg width="32" height="32" viewBox="0 0 32 32"><circle cx="16" cy="17" r="14.500" fill="#0d2a5e" stroke="#2a93d8" strokeWidth="1.800" /><path d="M3 22a14 14 0 0 0 26 0q-13 6-26 0z" fill="#1b66b5" /><path d="M10.500 12.500q.3-5.500 5.700-5.500 5.500 0 5.500 4.700 0 2.800-3 4.600-2.500 1.300-2.500 5" fill="none" stroke="#fff" strokeWidth="4.400" /><circle cx="16.200" cy="26.500" r="2.700" fill="#fff" /></svg>
        <svg className="ml-[14px]" width="13" height="8" viewBox="0 0 13 8"><path d="M1 7l5.500-5.500L12 7" fill="none" stroke="#fff" strokeWidth="1.300" /></svg>
        <svg className="ml-[10px]" width="15" height="10" viewBox="0 0 15 10"><rect x=".5" y=".5" width="12.500" height="9" fill="none" stroke="#fff" /><path d="M2 2h6v6H2zM13 3h2v4h-2z" fill="#fff" /></svg>
        <svg className="ml-[11px]" width="13" height="13" viewBox="0 0 13 13" fill="none" stroke="#ddd"><path d="M.5 12A11.500 11.500 0 0 1 12 .7M3.500 12.500A8.700 8.700 0 0 1 12 4M6.500 12.500A5.700 5.700 0 0 1 12 7.200" /><circle cx="11" cy="11.500" r="1.500" fill="#fff" stroke="none" /></svg>
        <span className="ml-[10px] w-[24px] tracking-[-0.5px]">ENG</span>
        <div className="ml-[11px] w-[60px] whitespace-nowrap text-center leading-[18px] tracking-[-0.4px]"><div>20:44</div><div>04-10-2016</div></div>
        <svg className="ml-[17px] mt-[3px]" width="25" height="26" viewBox="0 0 25 26"><path d="M0 2h16v13H8l-3 3v-3H0z" fill="#fff" /><path d="M3 5.500h10M3 8.500h10M3 11.500h7" stroke="#111" /><circle cx="15.500" cy="17" r="7.800" fill="#333" stroke="#999" /><text x="12.500" y="21.500" fontSize="12" fill="#fff" fontFamily="Open Sans">1</text></svg>
        <div className="ml-[11px] mr-[4px] h-[40px] w-px bg-[#555]" />
      </div>
    </div>
  );
}

export default function App() {
  return (
    <div className={`flex h-[768px] w-[1366px] flex-col overflow-hidden ${SEGOE}`}>
      <TabStrip />
      <Toolbar />
      <BookmarkBar />
      <Salesforce />
      <Shelf />
      <Taskbar />
    </div>
  );
}
